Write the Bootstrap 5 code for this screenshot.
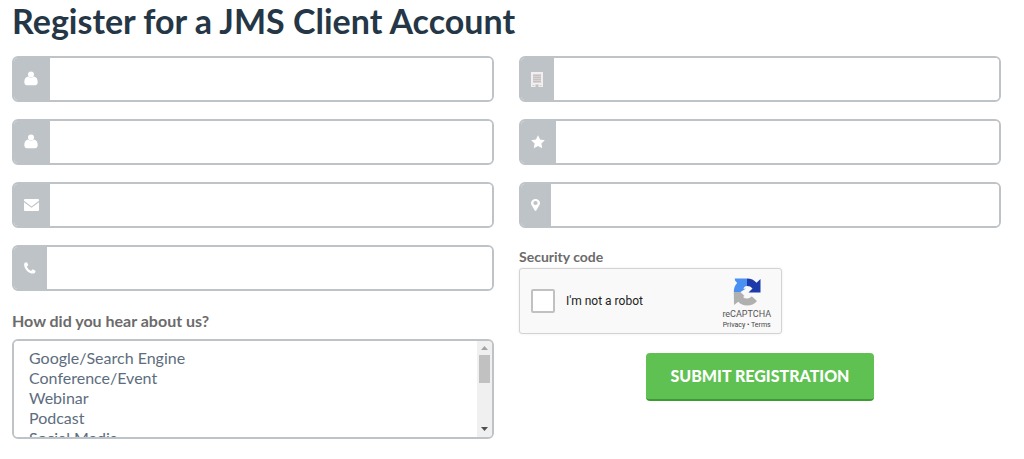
<!DOCTYPE html>
<html lang="en">
<head>
<meta charset="utf-8">
<meta name="viewport" content="width=device-width, initial-scale=1">
<title>Register for a JMS Client Account</title>
<link href="https://cdn.jsdelivr.net/npm/bootstrap@5.3.0/dist/css/bootstrap.min.css" rel="stylesheet">
<style>
body { font-family: Lato, sans-serif; color: #6b6b6b; background: #fff; }
.page { padding: 0 23px 20px 12px; }
.page-title { font-size: 34px; line-height: 42px; font-weight: 700; color: #253746; margin-bottom: 14px; }
.form-cols { --bs-gutter-x: 25px; }
.field { height: 46px; margin-bottom: 17px; border: 2px solid #bdc3c7; border-radius: 6px; flex-wrap: nowrap; overflow: hidden; }
.field .input-group-text { background: #bdc3c7; border: 0; border-radius: 0; padding: 0 0 0 10px; width: 36px; }
.field .addon-lg { width: 37px; }
.field .addon-md { width: 34px; }
.field .addon-sm { width: 31px; }
.field .form-control { border: 0; border-radius: 0; margin: 0; }
.hear-label { font-size: 16px; line-height: 20px; font-weight: 700; margin: 3px 0 8px; padding-top: 3px; }
.code-label { font-size: 14px; line-height: 18px; font-weight: 700; margin: 3px 0 2px; padding-top: 3px; }
.source-box { height: 100px; border: 2px solid #bdc3c7; border-radius: 6px; overflow: hidden; }
.source-list { height: 96px; border: 0; border-radius: 0; padding: 7px 0 0 15px; font-size: 16px; color: #5d6d7e; scrollbar-width: none; }
.source-list::-webkit-scrollbar { display: none; }
.source-list option { padding: 0; line-height: 20px; min-height: 20px; }
.scroll-track { width: 15px; background: #f0f0f0; flex: none; }
.scroll-thumb { width: 11px; height: 28px; background: #c1c1c1; }
.captcha { width: 263px; height: 66px; background: #f9f9f9; border: 1px solid #d3d3d3; border-radius: 3px; box-shadow: 0 0 3px rgba(0,0,0,.08); font-family: Roboto, sans-serif; color: #333; padding: 0 10px 0 11px; margin-bottom: 19px; }
.captcha .form-check-input { width: 24px; height: 24px; margin: 0; border: 2px solid #c1c1c1; border-radius: 2px; background-color: #fff; }
.captcha-text { font-size: 12px; line-height: 16px; margin-left: 11px; color: #222; }
.captcha-logo { margin: 6px 0 3px; }
.captcha-brand { font-size: 9px; line-height: 11px; color: #555; }
.captcha-links { font-size: 7px; line-height: 11px; }
.captcha-links a { color: #444; text-decoration: none; }
.btn-submit { width: 228px; height: 48px; background: #5ec152; color: #fff; border: 0; border-bottom: 2px solid #3d9a35; border-radius: 4px; font-size: 16px; line-height: 20px; font-weight: 900; padding: 0; }
.btn-submit:hover { background: #52b246; color: #fff; }
</style>
</head>
<body>
<main class="container-fluid page">
  <h1 class="page-title">Register for a JMS Client Account</h1>
  <form>
    <div class="row form-cols">
      <div class="col-6">
        <div class="input-group field">
          <label class="input-group-text addon-lg" for="first"><svg width="14" height="16" viewBox="0 0 14 16" fill="#fff" aria-hidden="true"><circle cx="7" cy="3.500" r="3"/><path d="M4 5.500C1.500 6 .3 8 .3 11c0 2 .8 3.200 2.700 3.200h8c1.900 0 2.700-1.200 2.700-3.200C13.700 8 12.500 6 10 5.500c-1.600 1.500-4.400 1.500-6 0z"/></svg></label>
          <input class="form-control" id="first" type="text" aria-label="First name">
        </div>
        <div class="input-group field">
          <label class="input-group-text addon-lg" for="last"><svg width="14" height="16" viewBox="0 0 14 16" fill="#fff" aria-hidden="true"><circle cx="7" cy="3.500" r="3"/><path d="M4 5.500C1.500 6 .3 8 .3 11c0 2 .8 3.200 2.700 3.200h8c1.900 0 2.700-1.200 2.700-3.200C13.700 8 12.500 6 10 5.500c-1.600 1.500-4.400 1.500-6 0z"/></svg></label>
          <input class="form-control" id="last" type="text" aria-label="Last name">
        </div>
        <div class="input-group field">
          <label class="input-group-text addon-lg" for="email"><svg width="15" height="12" viewBox="0 0 16 12" preserveAspectRatio="none" fill="#fff" aria-hidden="true"><path d="M0 1Q0 0 1 0h14q1 0 1 1v.8L8 7.400 0 1.800z"/><path d="M0 3.200 8 8.700l8-5.500V11q0 1-1 1H1q-1 0-1-1z"/></svg></label>
          <input class="form-control" id="email" type="email" aria-label="Email">
        </div>
        <div class="input-group field">
          <label class="input-group-text addon-md" for="phone"><svg width="12" height="12" viewBox="0 0 12 12" fill="#fff" aria-hidden="true"><path d="M.1 2.200C.2 1 1.200.3 2.400.2q.5 0 .7.400l1 2q.2.500-.1.800l-1 1q-.3.300 0 .8Q4.300 7.400 6.500 8.700q.5.300.8 0l1-1.200q.4-.3.800-.1l2 1q.5.300.4.800c-.2 1.400-1 2.300-2.500 2.400C4.700 11.700 0 7 .1 2.200z"/></svg></label>
          <input class="form-control" id="phone" type="tel" aria-label="Phone">
        </div>
        <label class="hear-label d-block" for="source">How did you hear about us?</label>
        <div class="source-box d-flex">
          <select class="form-select source-list" id="source" multiple>
            <option>Google/Search Engine</option>
            <option>Conference/Event</option>
            <option>Webinar</option>
            <option>Podcast</option>
            <option>Social Media</option>
            <option>Email</option>
            <option>Advertisement</option>
            <option>Referral</option>
            <option>Magazine</option>
            <option>Other</option>
          </select>
          <div class="scroll-track d-flex flex-column align-items-center" aria-hidden="true">
            <svg width="15" height="14" viewBox="0 0 15 14"><path d="M4 9 7.500 5 11 9z" fill="#a3a3a3"/></svg>
            <div class="scroll-thumb"></div>
            <svg class="mt-auto" width="15" height="15" viewBox="0 0 15 15"><path d="M4 5 7.500 9 11 5z" fill="#505050"/></svg>
          </div>
        </div>
      </div>
      <div class="col-6">
        <div class="input-group field">
          <label class="input-group-text addon-md" for="company"><svg width="12" height="15" viewBox="0 0 12 15" aria-hidden="true"><path d="M0 0h12v15H0z" fill="#f3efef"/><path d="M2 2h8v9H2z" fill="#d6d3d5"/><path d="M2 3.500h8M2 5.500h8M2 7.500h8M2 9.500h8" stroke="#c2bfc2" stroke-width=".8"/><path d="M4.500 15v-2.500h3V15z" fill="#bdc3c7"/><path d="M1.500 13.500h2M8.500 13.500h2" stroke="#d3cfd1"/></svg></label>
          <input class="form-control" id="company" type="text" aria-label="Company">
        </div>
        <div class="input-group field">
          <label class="input-group-text" for="jobtitle"><svg width="14" height="14" viewBox="0 0 14 14" fill="#fff" aria-hidden="true"><path d="m7 .3 2.100 4.300 4.700.7-3.400 3.300.8 4.700L7 11.100l-4.200 2.200.8-4.700L.2 5.300l4.700-.7z"/></svg></label>
          <input class="form-control" id="jobtitle" type="text" aria-label="Title">
        </div>
        <div class="input-group field">
          <label class="input-group-text addon-sm" for="address"><svg width="9" height="12" viewBox="0 0 8 12" preserveAspectRatio="none" fill="#fff" fill-rule="evenodd" aria-hidden="true"><path d="M4 0a4 4 0 0 1 4 4c0 1-.3 1.700-.6 2.300L4.700 11.500q-.7.900-1.400 0L.6 6.300C.3 5.700 0 5 0 4a4 4 0 0 1 4-4zm0 2.100a1.900 1.900 0 1 0 0 3.800 1.900 1.900 0 0 0 0-3.800z"/></svg></label>
          <input class="form-control" id="address" type="text" aria-label="Location">
        </div>
        <label class="code-label d-block" for="robot">Security code</label>
        <div class="captcha d-flex align-items-center">
          <input class="form-check-input" type="checkbox" id="robot">
          <label class="captcha-text" for="robot">I'm not a robot</label>
          <div class="ms-auto text-center d-flex flex-column align-items-center">
            <svg class="captcha-logo" width="28" height="28" viewBox="0 0 28 28" aria-hidden="true"><path d="M14 .5v7.500q-3 0-3.500 3l2.500-.5L7.500 14H.8C.8 10 2 7.200 4.200 5L2 2.500 1.800.5z" fill="#4a90f2"/><path d="M14 .5c4 0 7.200 1.500 9.500 4.300L27.500 1v13.500H15.500l4-4C18 8.800 16.500 8 14 8z" fill="#1c3aa9"/><path d="M.8 14h6.700l4 4-1.500 1q2 2 5 1.500 2-.5 3.500-2h.5L24 23c-2.400 3-5.800 4.500-10 4.500-3.600 0-6.500-1.300-8.700-3.800L1 27z" fill="#b0b0b0"/></svg>
            <div class="captcha-brand">reCAPTCHA</div>
            <div class="captcha-links"><a href="#">Privacy</a> • <a href="#">Terms</a></div>
          </div>
        </div>
        <div class="text-center">
          <button class="btn btn-submit" type="submit">SUBMIT REGISTRATION</button>
        </div>
      </div>
    </div>
  </form>
</main>
<script src="https://cdn.jsdelivr.net/npm/bootstrap@5.3.0/dist/js/bootstrap.bundle.min.js"></script>
</body>
</html>
